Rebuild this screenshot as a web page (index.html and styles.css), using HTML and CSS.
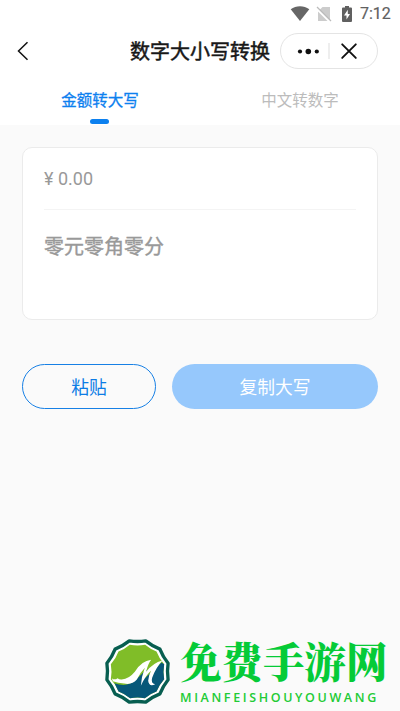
FILE: index.html
```html
<!DOCTYPE html>
<html lang="zh-CN">
<head>
<meta charset="utf-8">
<title>数字大小写转换</title>
<link rel="stylesheet" href="styles.css">
</head>
<body>
<header class="top">
  <div class="status">
    <svg class="wifi" width="20" height="16" viewBox="0 0 20 16"><path d="M.7 3.200C6-.9 14-.9 19.300 3.200L10 15Z" fill="#666"/></svg>
    <svg class="sim" width="16" height="17" viewBox="0 0 16 17"><path d="M6.500 1H14v14H2V5.500Z" fill="#ccc"/><path d="M.5 2.200 14.800 16.500" stroke="#fff" stroke-width="2.500"/><path d="M1 1 15 15" stroke="#bbb" stroke-width="1.300"/></svg>
    <svg class="battery" width="10" height="16" viewBox="0 0 10 16"><path d="M3 0h4v1.500h2q1 0 1 1V15q0 1-1 1H1q-1 0-1-1V2.500q0-1 1-1h2Z" fill="#606060"/><path d="M5.800 3.800 2 9.500h2.500v4L8 8H5.800Z" fill="#fff"/></svg>
    <span class="time">7:12</span>
  </div>
  <div class="nav">
    <svg class="back" width="12" height="20" viewBox="0 0 12 20"><path d="M10.500 1.200 1.500 10l9 8.800" fill="none" stroke="#111" stroke-width="1.500"/></svg>
    <h1 class="title">数字大小写转换</h1>
    <div class="capsule">
      <svg width="96" height="34" viewBox="0 0 96 34"><g fill="#111"><circle cx="19" cy="17.500" r="2.100"/><circle cx="27.300" cy="17.500" r="2.800"/><circle cx="35.800" cy="17.500" r="2.100"/></g><path d="M48 9v16" stroke="#ddd"/><path d="m61.200 10.300 13.600 13.600m0-13.600L61.200 23.900" stroke="#111" stroke-width="1.900" stroke-linecap="round"/></svg>
    </div>
  </div>
  <nav class="tabs">
    <div class="tab active">金额转大写</div>
    <div class="tab">中文转数字</div>
  </nav>
</header>
<main>
  <section class="card">
    <div class="amount">¥ 0.00</div>
    <div class="result">零元零角零分</div>
  </section>
  <div class="actions">
    <button class="btn paste">粘贴</button>
    <button class="btn copy">复制大写</button>
  </div>
</main>
<footer class="brand">
  <svg class="logo" width="67" height="67" viewBox="26.500 24.500 201 201">
    <path d="M151.600 33.200Q171 48.800 194.200 57.800Q203.200 81 218.800 100.400Q215 125 218.800 149.600Q203.200 169 194.200 192.200Q171 201.200 151.600 216.800Q127 213 102.400 216.800Q83 201.200 59.800 192.200Q50.800 169 35.200 149.600Q39 125 35.200 100.400Q50.800 81 59.800 57.800Q83 48.800 102.400 33.200Q127 37 151.600 33.200Z" fill="#fff" stroke="#075e50" stroke-width="10" stroke-linejoin="round"/>
    <path d="M104 45Q127 49 150 45Q165 58 184 65Q191 84 207 103Q203 125 207 148Q191 166 184 185Q164 192 149 205Q127 201 105 205Q89 192 70 185Q63 165 47 148Q51 125 47 103Q63 85 70 65Q89 58 104 45Z" fill="#80bd28"/>
    <path d="M58 160Q97 174 122 150L155 118 149 145 199 98 207 103Q203 125 207 148Q191 166 184 185Q164 192 149 205Q127 201 105 205Q89 192 70 185Z" fill="#075879"/>
    <path d="M50 145Q58 152 67 145Q73 150 80 149Q101 148 119 126Q139 93 168 90Q158 103 153 126Q173 99 202 92Q182 113 171 144Q166 162 180 163Q162 173 159 153Q160 136 168 122Q149 140 137 168Q139 140 149 114Q135 129 125 149Q110 166 87 161Q69 159 53 154Z" fill="#fff"/>
  </svg>
  <div class="wordmark">
    <div class="brand-cn">免费手游网</div>
    <div class="brand-en">MIANFEISHOUYOUWANG</div>
  </div>
</footer>
</body>
</html>
```
FILE: styles.css
```css
* { box-sizing: border-box; }
body {
  margin: 0;
  height: 711px;
  display: flex;
  flex-direction: column;
  overflow: hidden;
  background: #fafafa;
  font-family: Roboto, "Noto Sans CJK SC", sans-serif;
}
.top { height: 125px; background: #fff; }
.status {
  height: 28px;
  display: flex;
  justify-content: flex-end;
  align-items: center;
  padding-right: 9px;
}
.sim { margin-left: 6px; }
.battery { margin-left: 10px; }
.time {
  margin-left: 8px;
  width: 31px;
  font-size: 16px;
  line-height: 28px;
  color: #606060;
  -webkit-text-stroke: .2px #606060;
  white-space: nowrap;
}
.nav {
  height: 46px;
  display: grid;
  grid-template-columns: 113px 174px 113px;
  align-items: center;
}
.back { margin-left: 17px; }
.title {
  margin: 0;
  padding-top: 2px;
  text-align: center;
  font-size: 20px;
  line-height: 30px;
  font-weight: 400;
  color: #181818;
  -webkit-text-stroke: .5px #181818;
}
.capsule {
  width: 98px;
  height: 36px;
  margin-left: -7px;
  border: 1px solid #e4e4e4;
  border-radius: 18px;
  background: #fff;
}
.capsule svg { display: block; }
.tabs { height: 51px; display: grid; grid-template-columns: 1fr 1fr; }
.tab {
  display: flex;
  flex-direction: column;
  align-items: center;
  padding-top: 15px;
  font-size: 15.500px;
  line-height: 24px;
  color: #bcbcbc;
}
.active { color: #0c80ef; -webkit-text-stroke: .3px #0c80ef; }
.active::after {
  content: "";
  width: 19px;
  height: 5px;
  margin-top: 6px;
  margin-right: 1px;
  border-radius: 3px;
  background: #0c80ef;
}
.card {
  height: 173px;
  margin: 22px 22px 0;
  padding: 0 21px;
  border: 1px solid #ebebeb;
  border-radius: 10px;
  background: #fff;
}
.amount {
  height: 62px;
  border-bottom: 1px solid #f4f4f4;
  font-size: 18px;
  line-height: 61px;
  color: #999;
}
.result {
  padding-top: 22px;
  font-size: 20px;
  line-height: 30px;
  color: #999;
  -webkit-text-stroke: .4px #999;
}
.actions { display: flex; gap: 16px; padding: 44px 22px 0; }
.btn {
  height: 45px;
  padding: 2px 0 0;
  border-radius: 23px;
  font: 17.800px/42px Roboto, "Noto Sans CJK SC", sans-serif;
}
.paste { width: 134px; border: 1px solid #1780e5; background: #fafafa; color: #0c7ce5; }
.copy { width: 206px; border: 0; background: #96c8fc; color: #fff; }
.brand { display: flex; margin-top: auto; height: 75px; padding-left: 104px; }
.logo { margin-top: 2px; flex: none; }
.wordmark { margin-left: 9px; white-space: nowrap; }
.brand-cn {
  height: 52px;
  font-family: "Noto Serif CJK SC", "Noto Sans CJK SC", serif;
  font-weight: 900;
  font-size: 41.500px;
  line-height: 49px;
  color: #05cb37;
}
.brand-en {
  font-family: "Open Sans", sans-serif;
  font-weight: 600;
  font-size: 12.500px;
  line-height: 20px;
  letter-spacing: 2.620px;
  color: #22cb35;
}
```
